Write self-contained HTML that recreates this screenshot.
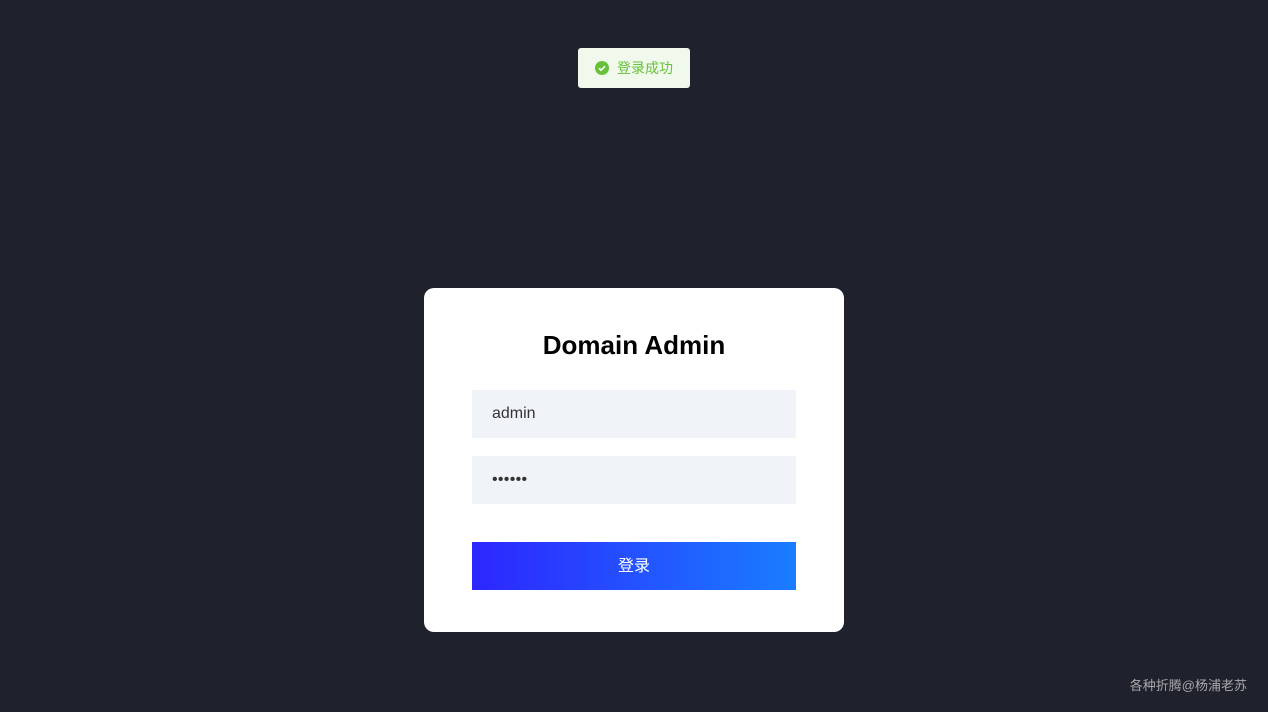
<!DOCTYPE html>
<html><head><meta charset="utf-8"><style>
html,body{margin:0;padding:0;width:1268px;height:712px;background:#1f212c;font-family:"Liberation Sans","Noto Sans CJK SC",sans-serif;overflow:hidden;position:relative}
.toast{position:absolute;left:578px;top:48px;width:112px;height:40px;box-sizing:border-box;background:#f0f9eb;border-radius:3px;}
.toast .ic{position:absolute;left:17px;top:13px;width:14px;height:14px;border-radius:50%;background:#67c23a}
.toast .t{position:absolute;left:39px;top:11px;font-size:14px;color:#67c23a;line-height:18px}
.card{position:absolute;left:424px;top:288px;width:420px;height:344px;background:#fff;border-radius:10px}
h1{position:absolute;left:0;width:420px;top:41px;margin:0;text-align:center;font-size:26px;font-weight:bold;color:#000;line-height:32px}
.in{position:absolute;left:48px;width:324px;height:48px;background:#f0f4f8;font-size:16px;color:#333;box-sizing:border-box;padding-left:20px;line-height:48px}
.btn{position:absolute;left:48px;top:254px;width:324px;height:48px;background:linear-gradient(90deg,#2d26ff,#1a7dff);color:#fff;text-align:center;line-height:50px;font-size:16px}
.ft{position:absolute;right:21px;top:677px;font-size:13px;color:#a8a9ad;line-height:18px}
</style></head><body>
<div class="toast"><div class="ic"><svg width="14" height="14" viewBox="0 0 14 14"><path d="M4 7.2l2 2 4-4" stroke="#fff" stroke-width="1.6" fill="none"/></svg></div><div class="t">登录成功</div></div>
<div class="card">
<h1>Domain Admin</h1>
<div class="in" style="top:102px;line-height:48px">admin</div>
<div class="in" style="top:168px;letter-spacing:0.3px">••••••</div>
<div class="btn">登录</div>
</div>
<div class="ft">各种折腾@杨浦老苏</div>
</body></html>
